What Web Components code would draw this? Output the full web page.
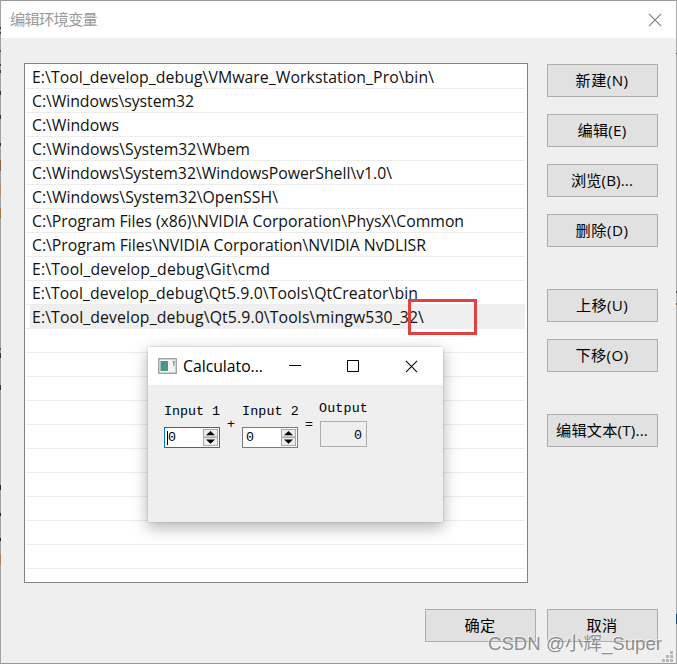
<!DOCTYPE html>
<html lang="zh-CN">
<head>
<meta charset="utf-8">
<title>编辑环境变量</title>
<style>
html,body{margin:0;width:677px;height:664px;overflow:hidden;background:#efefef}
body{position:relative;font:15.8px/24px "Open Sans","Noto Sans CJK SC",sans-serif;color:#111}
calc-window{position:absolute;left:148px;top:347px}
red-mark{position:absolute;left:408px;top:299px}
water-mark{position:absolute;left:488px;top:631px}
</style>
</head>
<body>
<env-dialog>
  <fit-text slot="title" w="90">编辑环境变量</fit-text>
  <path-list slot="list">
    <path-row w="402">E:\Tool_develop_debug\VMware_Workstation_Pro\bin\</path-row>
    <path-row w="162">C:\Windows\system32</path-row>
    <path-row w="87">C:\Windows</path-row>
    <path-row w="218">C:\Windows\System32\Wbem</path-row>
    <path-row w="360">C:\Windows\System32\WindowsPowerShell\v1.0\</path-row>
    <path-row w="246">C:\Windows\System32\OpenSSH\</path-row>
    <path-row w="432">C:\Program Files (x86)\NVIDIA Corporation\PhysX\Common</path-row>
    <path-row w="394">C:\Program Files\NVIDIA Corporation\NVIDIA NvDLISR</path-row>
    <path-row w="238">E:\Tool_develop_debug\Git\cmd</path-row>
    <path-row w="386">E:\Tool_develop_debug\Qt5.9.0\Tools\QtCreator\bin</path-row>
    <path-row w="392" selected>E:\Tool_develop_debug\Qt5.9.0\Tools\mingw530_32\</path-row>
    <path-row></path-row><path-row></path-row><path-row></path-row><path-row></path-row><path-row></path-row>
    <path-row></path-row><path-row></path-row><path-row></path-row><path-row></path-row><path-row></path-row>
  </path-list>
  <win-button slot="side" w="53">新建(N)</win-button>
  <win-button slot="side" w="49">编辑(E)</win-button>
  <win-button slot="side" w="62">浏览(B)...</win-button>
  <win-button slot="side" w="53">删除(D)</win-button>
  <win-button slot="side" w="52" gap>上移(U)</win-button>
  <win-button slot="side" w="53">下移(O)</win-button>
  <win-button slot="side" w="92" gap>编辑文本(T)...</win-button>
  <win-button slot="foot" w="31">确定</win-button>
  <win-button slot="foot" w="31">取消</win-button>
</env-dialog>
<calc-window></calc-window>
<red-mark></red-mark>
<water-mark></water-mark>
<script>
function define(name, html, init) {
  const t = document.createElement('template');
  t.innerHTML = html;
  customElements.define(name, class extends HTMLElement {
    connectedCallback() {
      if (this.shadowRoot) return;
      this.attachShadow({mode: 'open'}).append(t.content.cloneNode(true));
      if (init) init(this, this.shadowRoot);
    }
  });
}
// Spreads the letters of a run so that it fills the width in the "w" attribute.
define('fit-text', `<style>:host{display:inline-block;white-space:pre}</style><slot></slot>`, el => {
  const w = parseFloat(el.getAttribute('w'));
  const n = el.textContent.length;
  if (w && n) {
    const d = (w - el.getBoundingClientRect().width) / n;
    el.style.letterSpacing = d.toFixed(4) + 'px';
  }
});
function fitted(el, root) {
  const f = document.createElement('fit-text');
  f.setAttribute('w', el.getAttribute('w'));
  f.textContent = el.textContent.trim();
  root.querySelector('.label').append(f);
}
define('path-row', `<style>
:host{display:flex;box-sizing:border-box;height:24px;margin-left:1px;padding-left:4px;border-bottom:1px solid #ececec;flex:none}
.label{flex:1;height:24px;padding-left:2px;line-height:25px}
:host([selected]) .label{background:#efefef}
</style><div class="label"></div>`, (el, r) => { if (el.textContent) fitted(el, r); });
define('path-list', `<style>
:host{display:flex;flex-direction:column;box-sizing:border-box;width:504px;height:520px;border:1px solid #828282;background:#fff;padding:1px 2px 0 0;overflow:hidden}
</style><slot></slot>`);
define('win-button', `<style>
:host{display:flex;box-sizing:border-box;width:111px;height:33px;border:1px solid #adadad;background:#e1e1e1;align-items:center;justify-content:center;font-size:15.2px;font-family:"Open Sans","Noto Sans CJK SC",sans-serif;color:#000}
:host([gap]){margin-top:25px}
.label{display:flex;padding:0 1px 2px 0}
</style><div class="label"></div>`, fitted);
define('close-icon', `<style>:host{display:block}svg{display:block;width:var(--close-size,14px);height:var(--close-size,14px)}</style>
<svg viewBox="0 0 14 14" fill="none" stroke="currentColor" stroke-width="1.1"><path d="M1 1 13 13M13 1 1 13"/></svg>`);
define('env-dialog', `<style>
:host{display:grid;grid-template-columns:1px 1fr 1px;width:677px;height:664px}
.edge{background:#999}
.l{background:linear-gradient(#0000 27px,#333 27px 29px,#0000 29px 32px,#444 32px 34px,#0000 34px 50px,#555 50px 52px,#0000 52px 64px,#444 64px 66px,#0000 66px 70px,#444 70px 73px,#0000 73px 91px,#334 91px 95px,#0000 95px 115px,#334 115px 119px,#0000 119px 143px,#333 143px 146px,#0000 146px 160px,#8b6542 160px 171px,#0000 171px 183px,#b48a68 183px 195px,#0000 195px 208px,#a27a4c 208px 219px,#0000 219px 348px,#555 348px 350px,#0000 350px 353px,#433 353px 358px,#0000 358px 385px,#333 385px 390px,#0000 390px 485px,#224 485px 490px,#0000 490px 513px,#222 513px 516px,#0000 516px 538px,#222 538px 541px,#0000 541px 554px,#b08050 554px 565px,#0000 565px) #a2a2a2}
.r{background:linear-gradient(#0000 53px,#555 53px 54px,#0000 54px 291px,#555 291px 293px,#0000 293px 303px,#654 303px 305px,#0000 305px 614px,#124a8a 614px 624px,#0000 624px) #aaa}
.main{display:flex;flex-direction:column;box-sizing:border-box;border-top:1px solid #999;border-bottom:1px solid #999;background:#efefef}
header{height:37px;flex:none;box-sizing:border-box;background:#fff;display:flex;justify-content:space-between;align-items:center;padding:0 14px 0 9px;color:#999;font-size:15.3px}
::slotted([slot=title]){margin-top:-2px}
.body{display:flex;gap:19px;padding:25px 0 0 23px}
.side{display:flex;flex-direction:column;gap:17px;padding-top:1px}
.foot{display:flex;gap:11px;justify-content:flex-end;padding:26px 18px 0 0}
.grip{display:grid;grid-template-columns:repeat(3,3px);gap:1px;width:11px;margin:9px 3px 0 auto}
.grip i{width:3px;height:3px;background:#b8b8b8}
.grip .o{visibility:hidden}
close-icon{color:#888}
</style>
<div class="edge l"></div>
<div class="main">
<header><slot name="title"></slot><close-icon></close-icon></header>
<div class="body"><slot name="list"></slot><div class="side"><slot name="side"></slot></div></div>
<div class="foot"><slot name="foot"></slot></div>
<div class="grip"><i class="o"></i><i class="o"></i><i></i><i class="o"></i><i></i><i></i><i></i><i></i><i></i></div>
</div>
<div class="edge r"></div>`);
define('spin-box', `<style>
:host{display:flex;box-sizing:border-box;width:56px;height:21px;border:1px solid #7a7a7a;background:#fff;padding:1px 1px 1px 3px;align-items:center;justify-content:space-between;line-height:17px}
:host([focused]){border-color:#0078d7}
.v{display:flex;align-items:center;height:17px}
.caret{width:1px;height:14px;margin-left:-1px;background:transparent}
:host([focused]) .caret{background:#000}
svg{display:block}
</style><span class="v"><span class="caret"></span><slot></slot></span>
<svg width="15" height="17" viewBox="0 0 15 17"><rect x=".5" y=".5" width="14" height="7.5" fill="#ececec" stroke="#aaa"/><rect x=".5" y="8.5" width="14" height="8" fill="#ececec" stroke="#aaa"/><path d="M7.5 2 12 6.3H3zM7.5 14.8 12 10.5H3z" fill="#000"/></svg>`);
define('calc-window', `<style>
:host{display:flex;flex-direction:column;width:295px;height:175px;background:#efefef;box-shadow:0 5px 14px 1px rgba(0,0,0,.28),0 0 2px rgba(0,0,0,.2)}
header{height:38px;flex:none;box-sizing:border-box;background:#fff;display:flex;align-items:center;padding:0 25px 0 10px;color:#000}
header fit-text{margin-left:6px}
svg{display:block}
.min{margin-left:26px}.max{margin-left:46px}close-icon{margin-left:46px;--close-size:13px}
.row{display:flex;align-items:flex-start;padding:16px 0 0 16px;font:13.33px/18px "Liberation Mono","Noto Sans CJK SC",monospace;color:#000}
.f{display:flex;flex-direction:column}
.in{padding-top:2px;gap:6px;width:56px}
.lab{height:18px}
.op{width:22px;text-align:center;padding-top:15px}
.out{gap:3px;width:50px}
.out .lab{margin:-1px 0 0 -1px}
.res{box-sizing:border-box;width:47px;height:26px;border:1px solid #adadad;padding:4px 4px 0 0;text-align:right;line-height:19px}
</style>
<header>
<svg width="19" height="16" viewBox="0 0 19 16"><defs><linearGradient id="g" x1="0" y1="0" x2="1" y2="1"><stop stop-color="#4e87a6"/><stop offset="1" stop-color="#45a46f"/></linearGradient></defs><rect x=".75" y=".75" width="17.5" height="14.5" fill="#f3f3f3" stroke="#9a9a9a" stroke-width="1.3"/><rect x="2.5" y="3" width="7.5" height="10" fill="url(#g)"/><path d="M14.5 3h2.2v1.2l-.5 4h-.8l-.3-3.5z" fill="#6f9fa5"/></svg>
<fit-text w="80">Calculato...</fit-text>
<svg class="min" width="12" height="12"><path d="M0 5.5h12" stroke="#000"/></svg>
<svg class="max" width="12" height="12"><path d="M.5.5h11v11H.5z" fill="none" stroke="#000"/></svg>
<close-icon></close-icon>
</header>
<div class="row">
<div class="f in"><div class="lab"><fit-text w="56">Input 1</fit-text></div><spin-box focused>0</spin-box></div>
<div class="op">+</div>
<div class="f in"><div class="lab"><fit-text w="57">Input 2</fit-text></div><spin-box>0</spin-box></div>
<div class="op">=</div>
<div class="f out"><div class="lab"><fit-text w="49">Output</fit-text></div><div class="res">0</div></div>
</div>`);
define('red-mark', `<style>:host{display:block;box-sizing:border-box;width:69px;height:36px;border:3px solid #e3413f}</style>`);
define('water-mark', `<style>:host{display:block;font:18.5px/26px "Liberation Sans","Noto Sans CJK SC",sans-serif;color:rgba(130,130,130,.9);text-shadow:-1px -1px 0 rgba(255,255,255,.65)}</style><fit-text w="174">CSDN @小辉_Super</fit-text>`);
</script>
</body>
</html>
